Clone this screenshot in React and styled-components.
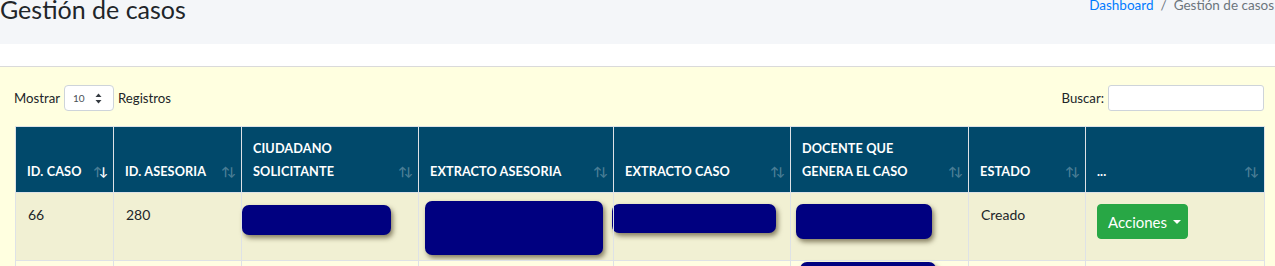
import React from 'react';
import styled, { createGlobalStyle } from 'styled-components';

const GlobalStyle = createGlobalStyle`
  html, body {
    margin: 0;
    padding: 0;
    background: #ffffff;
    font-family: Lato, "Liberation Sans", sans-serif;
    color: #212529;
    overflow: hidden;
  }
`;

const Page = styled.div`
  width: 1275px;
  position: relative;
  box-shadow: inset 10px 0 12px -8px rgba(0, 0, 0, 0.08);
`;

const ContentHeader = styled.div`
  height: 44px;
  background: #f4f6f9;
  display: flex;
  justify-content: space-between;
  align-items: flex-start;
  overflow: hidden;
`;

const Title = styled.h1`
  margin: -7px 0 0 0;
  font-size: 25px;
  font-weight: 400;
  line-height: 32px;
  color: #212529;
`;

const Breadcrumb = styled.ol`
  display: flex;
  list-style: none;
  margin: -5px 1px 0 0;
  padding: 0;
  font-size: 13.5px;
  line-height: 20px;
`;

const Crumb = styled.li`
  color: ${p => (p.$link ? '#007bff' : '#6c757d')};
`;

const Separator = styled.li`
  color: #6c757d;
  padding: 0 7px;
`;

const Spacer = styled.div`
  height: 22px;
  background: #ffffff;
  border-bottom: 1px solid #dadada;
`;

const Card = styled.div`
  background: #ffffe0;
  padding: 18px 11px 0 15px;
  min-height: 200px;
`;

const Controls = styled.div`
  display: flex;
  justify-content: space-between;
  align-items: center;
  height: 26px;
  margin-left: -1px;
  font-size: 13.2px;
`;

const Group = styled.label`
  display: flex;
  align-items: center;
  gap: 4px;
`;

const SelectBox = styled.div`
  width: 50px;
  height: 26px;
  box-sizing: border-box;
  background: #fff;
  border: 1px solid #ced4da;
  border-radius: 4px;
  display: flex;
  align-items: center;
  justify-content: space-between;
  padding: 0 11px 0 8px;
  font-size: 10px;
  color: #495057;
`;

const SearchInput = styled.div`
  width: 156px;
  height: 26px;
  box-sizing: border-box;
  background: #fff;
  border: 1px solid #ced4da;
  border-radius: 3px;
`;

const Table = styled.table`
  margin-top: 15px;
  width: 1249px;
  border-collapse: collapse;
  table-layout: fixed;
`;

const Th = styled.th`
  position: relative;
  height: 66px;
  box-sizing: border-box;
  background: #01496b;
  color: #ffffff;
  border: 1px solid #dee2e6;
  text-align: left;
  vertical-align: bottom;
  padding: 0 28px 9px 11px;
  font-size: 12.7px;
  font-weight: 700;
  line-height: 23px;
  letter-spacing: 0.1px;
`;

const Sort = styled.span`
  position: absolute;
  right: 8px;
  bottom: 14px;
  font-size: 12px;
  line-height: 13px;
  font-weight: 700;
  letter-spacing: -3px;
  color: rgba(255, 255, 255, 0.3);
`;

const Arrow = styled.span`
  color: ${p => (p.$on ? '#ffffff' : 'inherit')};
`;

const Tr = styled.tr`
  background: ${p => (p.$odd ? '#f1f0d3' : '#fffee2')};
`;

const Td = styled.td`
  border: 1px solid #dee2e6;
  vertical-align: top;
  padding: 11px 12px 12px;
  font-size: 14px;
  line-height: 21px;
  height: 68px;
  box-sizing: border-box;
`;

const Redacted = styled.div`
  width: ${p => p.$w}px;
  height: ${p => p.$h}px;
  margin-left: ${p => p.$x}px;
  margin-top: ${p => p.$y}px;
  margin-bottom: ${p => p.$b || 0}px;
  background: #000080;
  border-radius: 7px;
  box-shadow: 2px 3px 5px rgba(60, 50, 20, 0.6);
`;

const ActionButton = styled.button`
  margin: 0 0 0 -1px;
  height: 35px;
  width: 91px;
  background: #28a745;
  color: #fff;
  border: 1px solid #28a745;
  border-radius: 4px;
  font-family: inherit;
  font-size: 15px;
  padding: 0 10px;
  display: flex;
  align-items: center;
  gap: 6px;
`;

const Caret = styled.span`
  width: 0;
  height: 0;
  border-left: 4px solid transparent;
  border-right: 4px solid transparent;
  border-top: 4px solid #fff;
`;

const columns = [
  { w: 98, label: ['ID. CASO'], active: true },
  { w: 128, label: ['ID. ASESORIA'] },
  { w: 177, label: ['CIUDADANO', 'SOLICITANTE'] },
  { w: 195, label: ['EXTRACTO ASESORIA'] },
  { w: 177, label: ['EXTRACTO CASO'] },
  { w: 178, label: ['DOCENTE QUE', 'GENERA EL CASO'] },
  { w: 117, label: ['ESTADO'] },
  { w: 179, label: ['...'] },
];

function SelectArrows() {
  return (
    <svg width="7" height="11" viewBox="0 0 7 11">
      <path d="M3.5 0.5 L6.5 4 L0.5 4 Z" fill="#343a40" />
      <path d="M3.5 10.5 L6.5 7 L0.5 7 Z" fill="#343a40" />
    </svg>
  );
}

function Row({ odd, id, asesoria, docenteOffset }) {
  return (
    <Tr $odd={odd}>
      <Td>{id}</Td>
      <Td>{asesoria}</Td>
      <Td><Redacted $w={149} $h={30} $x={-12} $y={1} /></Td>
      <Td><Redacted $w={178} $h={54} $x={-6} $y={-3} $b={-12} /></Td>
      <Td><Redacted $w={164} $h={29} $x={-14} $y={0} /></Td>
      <Td><Redacted $w={136} $h={35} $x={docenteOffset.x} $y={docenteOffset.y} /></Td>
      <Td>Creado</Td>
      <Td>
        <ActionButton>
          Acciones <Caret />
        </ActionButton>
      </Td>
    </Tr>
  );
}

export default function App() {
  return (
    <Page>
      <GlobalStyle />
      <ContentHeader>
        <Title>Gestión de casos</Title>
        <Breadcrumb>
          <Crumb $link>Dashboard</Crumb>
          <Separator>/</Separator>
          <Crumb>Gestión de casos</Crumb>
        </Breadcrumb>
      </ContentHeader>
      <Spacer />
      <Card>
        <Controls>
          <Group>
            Mostrar
            <SelectBox>
              <span>10</span>
              <SelectArrows />
            </SelectBox>
            Registros
          </Group>
          <Group>
            Buscar:
            <SearchInput />
          </Group>
        </Controls>
        <Table>
          <colgroup>
            {columns.map((c, i) => (
              <col key={i} style={{ width: c.w }} />
            ))}
          </colgroup>
          <thead>
            <tr>
              {columns.map((c, i) => (
                <Th key={i}>
                  {c.label.map((l, j) => (
                    <div key={j}>{l}</div>
                  ))}
                  <Sort>
                    <Arrow>↑</Arrow>
                    <Arrow $on={c.active}>↓</Arrow>
                  </Sort>
                </Th>
              ))}
            </tr>
          </thead>
          <tbody>
            <Row odd id="66" asesoria="280" docenteOffset={{ x: -7, y: 0 }} />
            <Row id="65" asesoria="279" docenteOffset={{ x: -3, y: -10 }} />
          </tbody>
        </Table>
      </Card>
    </Page>
  );
}
